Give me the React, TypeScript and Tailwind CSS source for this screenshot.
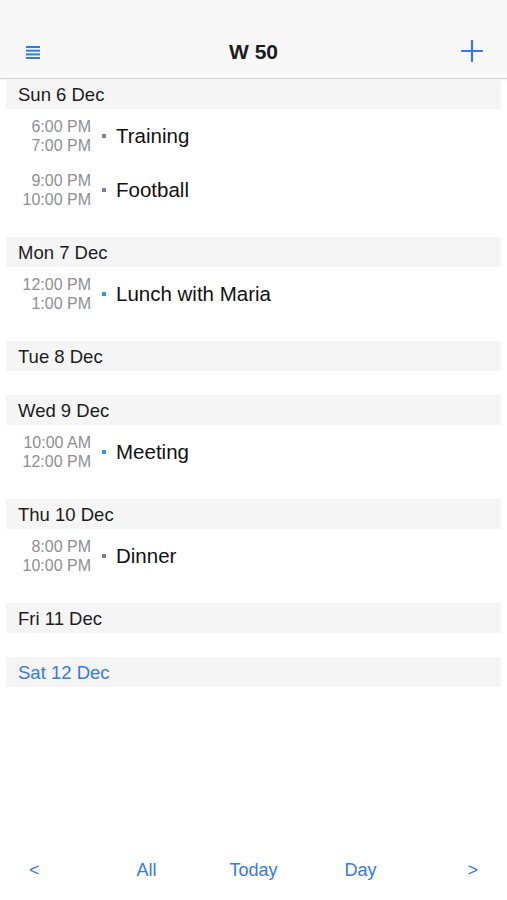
const days = [
  {
    label: "Sun 6 Dec",
    events: [
      { start: "6:00 PM", end: "7:00 PM", title: "Training", color: "bg-[#7c7fa6]" },
      { start: "9:00 PM", end: "10:00 PM", title: "Football", color: "bg-[#7c7fa6]" },
    ],
  },
  {
    label: "Mon 7 Dec",
    events: [{ start: "12:00 PM", end: "1:00 PM", title: "Lunch with Maria", color: "bg-[#1f9bf0]" }],
  },
  { label: "Tue 8 Dec", events: [] },
  {
    label: "Wed 9 Dec",
    events: [{ start: "10:00 AM", end: "12:00 PM", title: "Meeting", color: "bg-[#1f9bf0]" }],
  },
  {
    label: "Thu 10 Dec",
    events: [{ start: "8:00 PM", end: "10:00 PM", title: "Dinner", color: "bg-[#7c7fa6]" }],
  },
  { label: "Fri 11 Dec", events: [] },
  { label: "Sat 12 Dec", events: [], today: true },
];

function MenuIcon() {
  return (
    <svg width="14" height="15" viewBox="0 0 14 15" fill="#3478f6">
      <rect x="0" y="1" width="14" height="2" />
      <rect x="0" y="4.7" width="14" height="2" />
      <rect x="0" y="8.4" width="14" height="2" />
      <rect x="0" y="12" width="14" height="2" />
    </svg>
  );
}

function PlusIcon() {
  return (
    <svg width="22" height="22" viewBox="0 0 22 22" stroke="#3478f6" strokeWidth="2.2" strokeLinecap="round">
      <line x1="11" y1="1" x2="11" y2="21" />
      <line x1="1" y1="11" x2="21" y2="11" />
    </svg>
  );
}

export default function App() {
  return (
    <div className="flex flex-col h-[900px] w-full bg-white font-['Liberation_Sans',Arial,sans-serif] text-[#1c1c1e]">
      {/* nav bar */}
      <header className="h-[79px] pt-[30px] bg-[#f7f7f7] border-b border-[#d6d6d6] shadow-[0_1px_2px_rgba(0,0,0,0.06)]">
        <div className="h-[44px] grid grid-cols-[1fr_auto_1fr] items-center">
          <div className="pl-[26px] flex items-center pt-[1px]">
            <MenuIcon />
          </div>
          <h1 className="text-[21px] font-bold">W 50</h1>
          <div className="flex justify-end pr-[24px] -mt-[2px]">
            <PlusIcon />
          </div>
        </div>
      </header>

      <main className="flex-1">
        {days.map((day) => (
          <section key={day.label} className={day.events.length ? "mb-[20px]" : "mb-[24px]"}>
            <div
              className={`mx-[6px] h-[30px] pt-[2px] pl-[12px] flex items-center bg-[#f5f5f5] text-[18.5px] ${
                day.today ? "text-[#3478f6]" : "text-[#1c1c1e]"
              }`}
            >
              {day.label}
            </div>
            {day.events.map((ev) => (
              <div key={ev.title} className="h-[54px] flex items-center">
                <div className="w-[91px] text-right text-[16px] leading-[19px] text-[#8e8e93]">
                  <div>{ev.start}</div>
                  <div>{ev.end}</div>
                </div>
                <span className={`ml-[11px] w-[4px] h-[4px] ${ev.color}`} />
                <span className="ml-[10px] text-[20.5px] text-[#111]">{ev.title}</span>
              </div>
            ))}
          </section>
        ))}
      </main>

      {/* toolbar */}
      <footer className="h-[44px] mb-[8px] grid grid-cols-[1fr_107px_107px_107px_1fr] items-center text-[18px] text-[#3478f6]">
        <span className="justify-self-start pl-[29px]">&lt;</span>
        <span className="text-center">All</span>
        <span className="text-center">Today</span>
        <span className="text-center">Day</span>
        <span className="justify-self-end pr-[29px]">&gt;</span>
      </footer>
    </div>
  );
}
